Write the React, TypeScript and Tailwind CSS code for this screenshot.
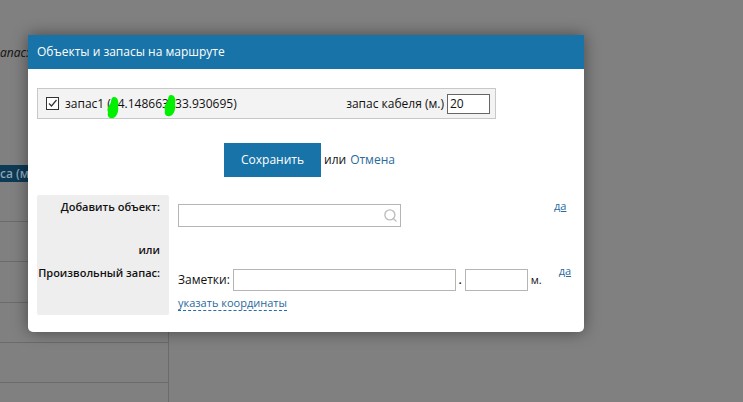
import React from "react";
import { Search } from "lucide-react";

const font = { fontFamily: '"Open Sans", "Noto Sans", sans-serif' };

const Backdrop = () => (
  <div className="absolute inset-0 bg-[#808080]">
    <p className="absolute left-0 top-[44px] text-[12px] italic text-[#111]">апас:</p>
    <div className="absolute left-0 top-[165px] h-[17px] w-[60px] bg-[#0d3a55] pl-0 text-[12px] font-semibold leading-[17px] text-[#8fa5b3]">
      са (м)
    </div>
    <div className="absolute left-0 top-[221px] h-px w-[168px] bg-[#6b6b6b]" />
    <div className="absolute left-0 top-[261px] h-px w-[168px] bg-[#6b6b6b]" />
    <div className="absolute left-0 top-[302px] h-px w-[168px] bg-[#6b6b6b]" />
    <div className="absolute left-0 top-[342px] h-px w-[168px] bg-[#6b6b6b]" />
    <div className="absolute left-0 top-[382px] h-px w-[168px] bg-[#6b6b6b]" />
    <div className="absolute left-[168px] top-[160px] h-[242px] w-px bg-[#6b6b6b]" />
  </div>
);

const Blob = ({ className }: { className: string }) => (
  <svg className={`absolute ${className}`} width="14" height="24" viewBox="0 0 14 24">
    <path d="M8 1 C12 1 13 6 12 10 C13 15 11 21 7 22 C3 23 1 20 2 16 C0 12 4 9 5 6 C5 3 6 1 8 1 Z" fill="#00f000" />
  </svg>
);

export default function App() {
  return (
    <div className="relative h-[402px] w-[743px] overflow-hidden" style={font}>
      <Backdrop />
      <div className="absolute left-[28px] top-[35px] flex h-[297px] w-[556px] flex-col overflow-hidden rounded-b-[5px] bg-white text-[12px] text-[#111] shadow-[0_0_16px_rgba(0,0,0,0.45)]">
        <div className="flex h-[34px] items-center bg-[#1874a8] pl-[9px] text-[12px] text-white">
          Объекты и запасы на маршруте
        </div>

        <div className="flex flex-col px-[9px] pt-[19px]">
          <div className="relative flex h-[31px] w-[459px] items-center justify-between border border-[#c8c8c8] bg-[#f3f3f3] pl-[8px] pr-[5px]">
            <div className="flex items-center">
              <span className="flex h-[13px] w-[13px] items-center justify-center border border-[#333] bg-white">
                <svg width="11" height="11" viewBox="0 0 11 11" fill="none" stroke="#333" strokeWidth="1.2">
                  <path d="M2 5.5 L4.5 8 L9.5 2" />
                </svg>
              </span>
              <span className="ml-[6px]">запас1 (44.148663, 33.930695)</span>
            </div>
            <Blob className="left-[68px] top-[7px]" />
            <Blob className="left-[125px] top-[5px]" />
            <div className="flex items-center">
              <span className="mr-[3px]">запас кабеля (м.)</span>
              <input
                readOnly
                value="20"
                className="h-[20px] w-[43px] border border-[#666] bg-white px-[2px] text-[12px] text-[#111] outline-none"
              />
            </div>
          </div>

          <div className="mt-[23px] flex h-[35px] items-center pl-[187px]">
            <button className="h-[34px] w-[97px] bg-[#1874a8] text-[12px] text-white">Сохранить</button>
            <span className="ml-[3px]">или</span>
            <a className="ml-[4px] text-[#2a6a9e]">Отмена</a>
          </div>

          <div className="mt-[18px] flex">
            <div className="flex h-[120px] w-[132px] flex-col items-end rounded-[2px] bg-[#eeeeee] pr-[9px] pt-[4px] text-[11px] font-semibold">
              <span>Добавить объект:</span>
              <span className="mt-[26px]">или</span>
              <span className="mt-[7px]">Произвольный запас:</span>
            </div>

            <div className="ml-[9px] flex flex-col">
              <div className="mt-[9px] flex items-start">
                <div className="flex h-[23px] w-[223px] items-center justify-end border border-[#b5b5b5] pr-[2px]">
                  <Search size={15} strokeWidth={2.2} className="text-[#bdbdbd]" />
                </div>
                <a className="ml-[153px] mt-[-6px] text-[11px] text-[#2a6a9e] underline">да</a>
              </div>
              <div className="mt-[42px] flex items-start">
                <div className="flex items-center">
                  <span>Заметки:</span>
                  <div className="ml-[3px] h-[22px] w-[223px] border border-[#b5b5b5]" />
                  <span className="mx-[3px] text-[10px] font-bold">.</span>
                  <div className="h-[22px] w-[63px] border border-[#b5b5b5]" />
                  <span className="ml-[3px] text-[11px]">м.</span>
                </div>
                <a className="ml-[17px] mt-[-6px] text-[11px] text-[#2a6a9e] underline">да</a>
              </div>
              <a className="mt-[5px] w-fit border-b border-dashed border-[#2a6a9e] text-[11px] leading-[14px] text-[#2a6a9e]">
                указать координаты
              </a>
            </div>
          </div>
        </div>
      </div>
    </div>
  );
}
